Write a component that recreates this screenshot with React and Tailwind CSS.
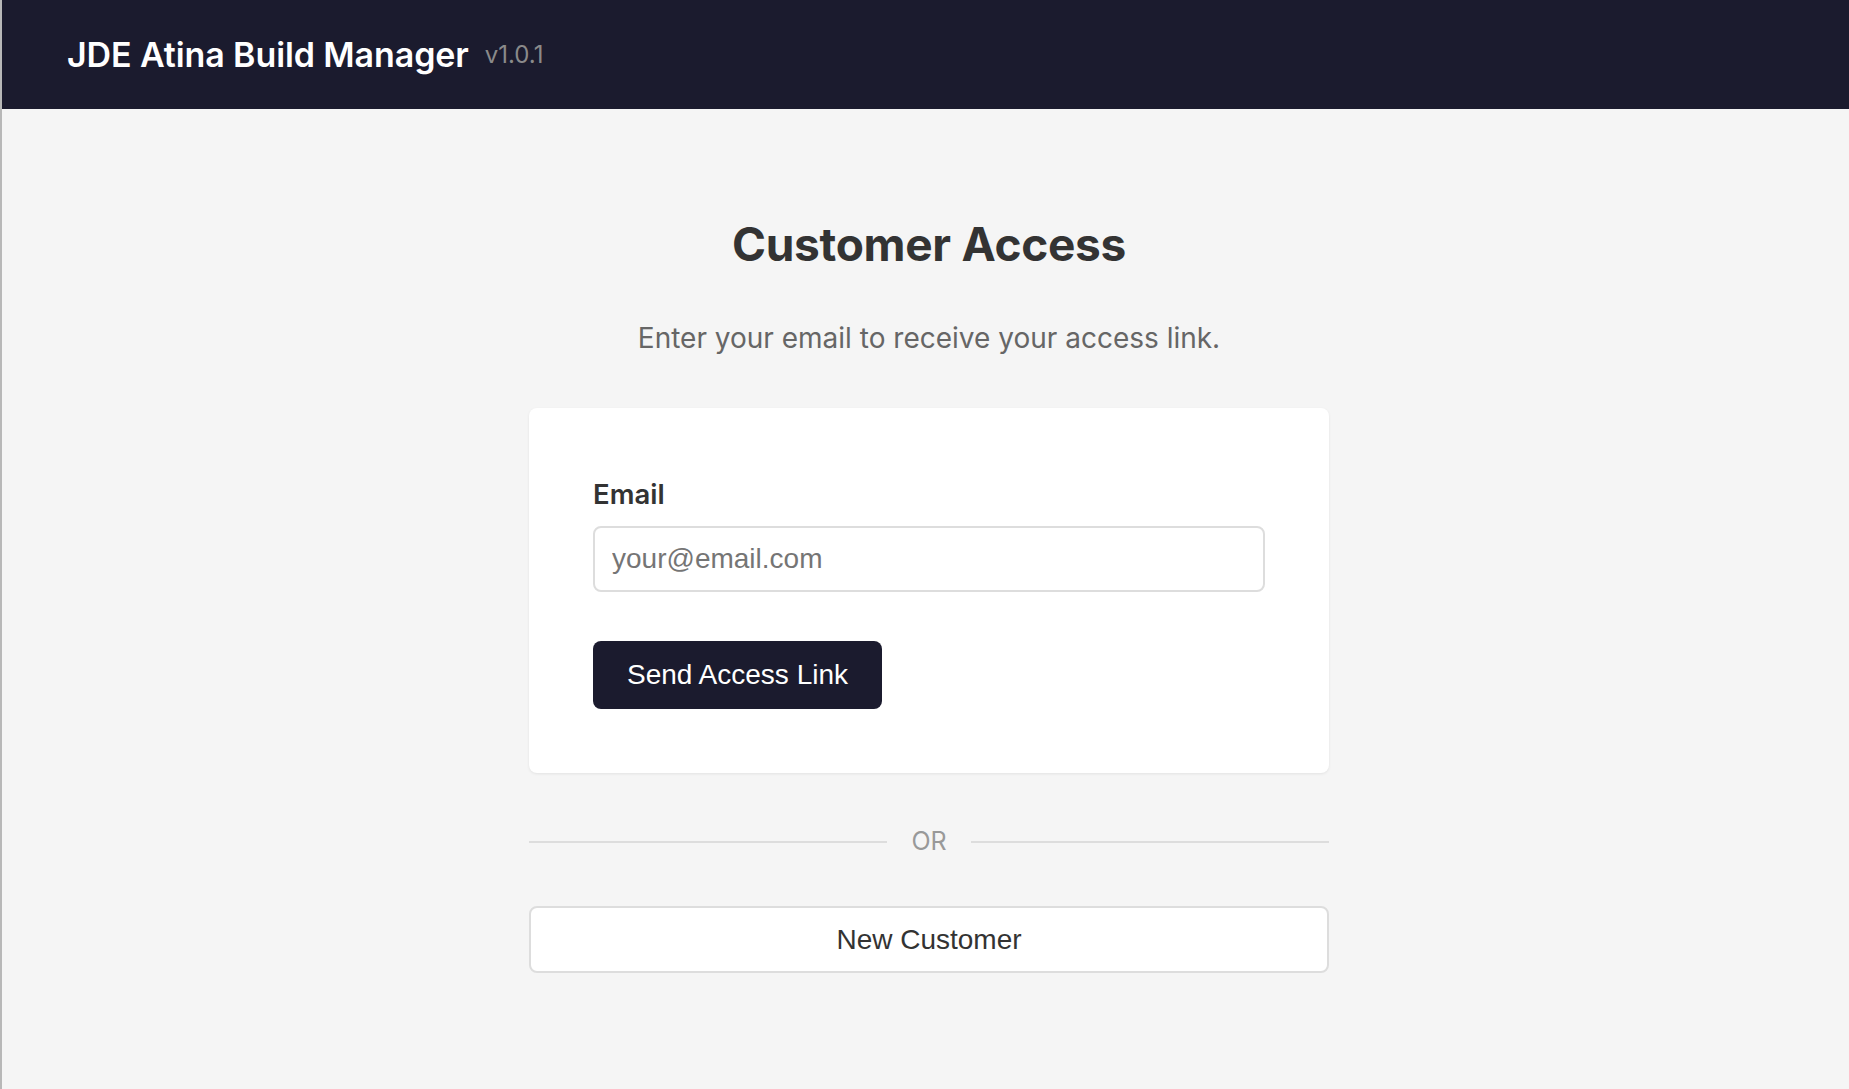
import { useState } from 'react'

export default function App() {
  const [email, setEmail] = useState('')

  const handleSubmit = (e) => {
    e.preventDefault()
  }

  return (
    <div className="min-h-screen bg-[#f5f5f5] border-l-2 border-[#b8b8b8] font-['Inter',sans-serif]">
      {/* Top bar */}
      <header className="h-[109px] bg-[#1b1b2e] flex items-center px-[65px]">
        <div className="flex items-center">
          <h1 className="text-[34px] font-semibold text-white tracking-[-0.1px]">JDE Atina Build Manager</h1>
          <span className="ml-[16px] text-[24px] text-[#8a8a8a]">v1.0.1</span>
        </div>
      </header>

      <main className="flex flex-col items-center pl-[7px] pt-[106px] pb-16">
        <h2 className="text-[46px] leading-[58px] font-bold text-[#333333] tracking-[-0.3px]">Customer Access</h2>
        <p className="mt-[51px] text-[28px] leading-[29px] text-[#666666]">
          Enter your email to receive your access link.
        </p>

        {/* Email form card */}
        <form
          onSubmit={handleSubmit}
          className="mt-[55px] w-[800px] bg-white rounded-lg shadow-[0_1px_3px_rgba(0,0,0,0.08)] px-16 pt-16 pb-16"
        >
          <label className="block text-[27.5px] leading-[45px] font-semibold text-[#333333] mb-[9px]">Email</label>
          <input
            type="email"
            className="block w-full h-[66px] px-[17px] border-2 border-[#dddddd] rounded-lg bg-white text-[28px] text-[#333333] placeholder:text-[#757575] font-['Liberation_Sans',Arial,sans-serif] outline-none"
            placeholder="your@email.com"
            value={email}
            onChange={e => setEmail(e.target.value)}
          />
          <button
            type="submit"
            className="mt-[49px] h-[68px] w-[289px] bg-[#1b1b2e] text-white text-[28px] rounded-lg font-['Liberation_Sans',Arial,sans-serif]"
          >
            Send Access Link
          </button>
        </form>

        {/* OR divider */}
        <div className="mt-[54px] w-[800px] flex items-center gap-[24px] h-[30px]">
          <div className="flex-1 h-[2px] bg-[#dddddd]" />
          <span className="text-[25px] text-[#999999]">OR</span>
          <div className="flex-1 h-[2px] bg-[#dddddd]" />
        </div>

        <button
          type="button"
          className="mt-[49px] w-[800px] h-[67px] bg-white border-2 border-[#dddddd] rounded-lg text-[28px] text-[#333333] font-['Liberation_Sans',Arial,sans-serif]"
        >
          New Customer
        </button>
      </main>
    </div>
  )
}
